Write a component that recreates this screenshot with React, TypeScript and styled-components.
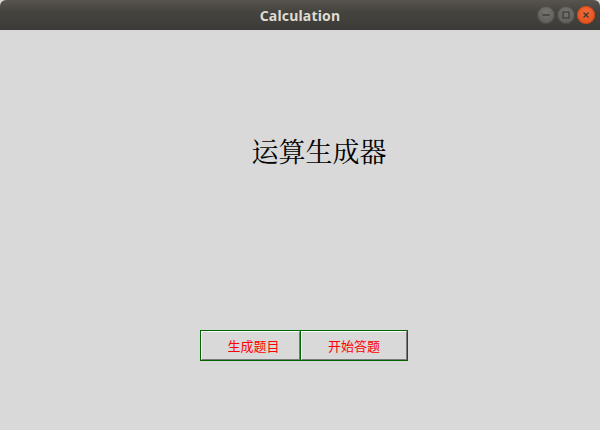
import styled, { createGlobalStyle } from 'styled-components';

const GlobalStyle = createGlobalStyle`
  html, body {
    margin: 0;
    padding: 0;
    background: #d9d9d9;
  }
`;

const Window = styled.div`
  width: 600px;
  height: 430px;
  display: flex;
  flex-direction: column;
  background: #d9d9d9;
  overflow: hidden;
`;

const TitleBar = styled.div`
  height: 30px;
  flex: none;
  position: relative;
  display: flex;
  align-items: center;
  justify-content: center;
  background: linear-gradient(#57544e, #45433e 40%, #3c3b37);
  border-radius: 6px 6px 0 0;
`;

const Title = styled.span`
  font-family: "Noto Sans", "DejaVu Sans", sans-serif;
  font-weight: 700;
  font-size: 14px;
  color: #dfdbd2;
  letter-spacing: 0.2px;
`;

const Controls = styled.div`
  position: absolute;
  right: 5px;
  top: 6px;
  display: flex;
  gap: 2px;
`;

const Ctrl = styled.div<{ $close?: boolean }>`
  width: 18px;
  height: 18px;
  border-radius: 50%;
  display: flex;
  align-items: center;
  justify-content: center;
  background: ${p => p.$close
    ? 'radial-gradient(circle at 50% 35%, #f26b3a, #df4b16)'
    : 'radial-gradient(circle at 50% 35%, #75736e, #5a5853)'};
  box-shadow: inset 0 0 0 1px ${p => p.$close ? '#c6461a' : '#4a4844'};
`;

const Content = styled.div`
  flex: 1;
  display: flex;
  flex-direction: column;
`;

const Heading = styled.h1`
  margin: 106px 0 0 0;
  padding-left: 38px;
  text-align: center;
  font-family: "Noto Serif CJK SC", "Noto Sans CJK SC", serif;
  font-weight: 400;
  font-size: 27px;
  line-height: 30px;
  color: #000;
`;

const ButtonGroup = styled.div`
  margin: 164px 0 0 200px;
  align-self: flex-start;
  display: flex;
  border: 1px solid #006400;
  background: #006400;
  gap: 1px;
`;

const Btn = styled.button<{ $w: number }>`
  width: ${p => p.$w}px;
  height: 29px;
  box-sizing: border-box;
  margin: 0;
  padding: 0 0 0 ${p => (p.$w < 100 ? 6 : 0)}px;
  background: #d9d9d9;
  border: 1px solid;
  border-color: #ffffff #7a7a7a #7a7a7a #ffffff;
  font-family: "Noto Sans CJK SC", sans-serif;
  font-size: 13px;
  color: #ff0000;
  cursor: pointer;
`;

export default function App() {
  return (
    <>
      <GlobalStyle />
      <Window>
        <TitleBar>
          <Title>Calculation</Title>
          <Controls>
            <Ctrl>
              <svg width="10" height="10" viewBox="0 0 10 10">
                <path d="M1.5 5h7" stroke="#3c3b37" strokeWidth="1.4" />
              </svg>
            </Ctrl>
            <Ctrl>
              <svg width="10" height="10" viewBox="0 0 10 10">
                <rect x="2" y="2" width="6" height="6" fill="none" stroke="#3c3b37" strokeWidth="1.2" />
              </svg>
            </Ctrl>
            <Ctrl $close>
              <svg width="10" height="10" viewBox="0 0 10 10">
                <path d="M2.5 2.5l5 5M7.5 2.5l-5 5" stroke="#3c3b37" strokeWidth="1.4" />
              </svg>
            </Ctrl>
          </Controls>
        </TitleBar>
        <Content>
          <Heading>运算生成器</Heading>
          <ButtonGroup>
            <Btn $w={99}>生成题目</Btn>
            <Btn $w={106}>开始答题</Btn>
          </ButtonGroup>
        </Content>
      </Window>
    </>
  );
}
